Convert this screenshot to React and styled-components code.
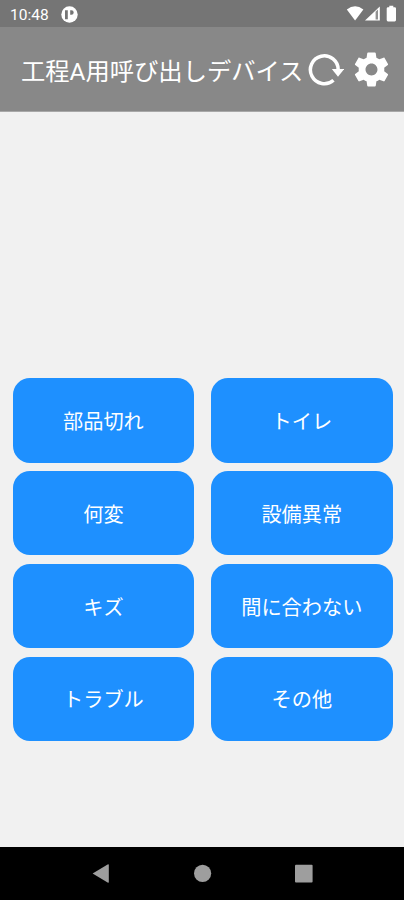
import styled, { createGlobalStyle } from "styled-components";

const calls = [
  "部品切れ",
  "トイレ",
  "何変",
  "設備異常",
  "キズ",
  "間に合わない",
  "トラブル",
  "その他",
];

const App = () => {
  return (
    <Screen>
      <GlobalStyle />
      <StatusBar>
        <Clock>10:48</Clock>
        <AppIcon />
        <StatusIcons />
      </StatusBar>
      <Header>
        <Title>工程A用呼び出しデバイス</Title>
        <IconButton aria-label="更新" $width={43}>
          <ReloadIcon />
        </IconButton>
        <IconButton aria-label="設定" $width={41}>
          <SettingsIcon />
        </IconButton>
      </Header>
      <Main>
        <CallList>
          {calls.map((name) => (
            <CallButton key={name}>{name}</CallButton>
          ))}
        </CallList>
      </Main>
      <NavBar>
        <svg width="404" height="53" viewBox="0 0 404 53" fill="#9e9e9e">
          <path d="M92.6 26.5L107.6 17.4Q108.8 16.8 108.8 18V35Q108.8 36.2 107.6 35.6Z" />
          <circle cx="202.6" cy="26.3" r="8.6" />
          <rect x="295" y="17.8" width="17.6" height="17.6" rx="1" />
        </svg>
      </NavBar>
    </Screen>
  );
};

export default App;

const AppIcon = () => (
  <svg width="17" height="17" viewBox="0 0 17 17">
    <circle cx="8.5" cy="8.5" r="8.2" fill="#fff" />
    <path
      d="M4 4.2H6.8V13.2H4ZM9.2 4.2H10.4A2.3 2.3 0 0 1 10.4 8.8H9.2Z"
      fill="#757575"
    />
  </svg>
);

const StatusIcons = () => (
  <StatusSvg width="51" height="18" viewBox="0 0 51 18" fill="#fff">
    <path d="M0.8 4.4Q9.1 -2 17.4 4.4L9.1 15.4Z" />
    <path d="M19 15.6L33.8 1.6V15.6Z" />
    <path d="M29.6 6.8L32 4.6V14.4H29.6Z" fill="#757575" fillOpacity="0.8" />
    <path d="M43.3 0.8H47.3V2.2H48.7Q50 2.2 50 3.5V15.1Q50 16.4 48.7 16.4H42Q40.7 16.4 40.7 15.1V3.5Q40.7 2.2 42 2.2H43.3Z" />
  </StatusSvg>
);

const ReloadIcon = () => (
  <svg width="36" height="34" viewBox="0 0 36 34">
    <path
      d="M30.2 18V17A13.9 13.9 0 1 0 25.5 27.2"
      fill="none"
      stroke="#fff"
      strokeWidth="3.5"
    />
    <path d="M23.8 16H36.2L30 23.8Z" fill="#fff" />
  </svg>
);

const SettingsIcon = () => (
  <svg width="41" height="41" viewBox="0 0 24 24" fill="#fff">
    <path d="M19.43 12.98c.04-.32.07-.64.07-.98s-.03-.66-.07-.98l2.11-1.65c.19-.15.24-.42.12-.64l-2-3.46c-.12-.22-.39-.3-.61-.22l-2.49 1c-.52-.4-1.08-.73-1.69-.98l-.38-2.65C14.46 2.18 14.25 2 14 2h-4c-.25 0-.46.18-.49.42l-.38 2.65c-.61.25-1.17.59-1.69.98l-2.49-1c-.23-.09-.49 0-.61.22l-2 3.46c-.13.22-.07.49.12.64l2.11 1.65c-.04.32-.07.65-.07.98s.03.66.07.98l-2.11 1.65c-.19.15-.24.42-.12.64l2 3.46c.12.22.39.3.61.22l2.49-1c.52.4 1.08.73 1.69.98l.38 2.65c.03.24.24.42.49.42h4c.25 0 .46-.18.49-.42l.38-2.65c.61-.25 1.17-.59 1.69-.98l2.49 1c.23.09.49 0 .61-.22l2-3.46c.12-.22.07-.49-.12-.64l-2.11-1.65zM12 15.5c-1.93 0-3.5-1.57-3.5-3.5s1.57-3.5 3.5-3.5 3.5 1.57 3.5 3.5-1.57 3.5-3.5 3.5z" />
  </svg>
);

const GlobalStyle = createGlobalStyle`
  body {
    margin: 0;
  }
  button {
    font: inherit;
    color: #fff;
    border: none;
    padding: 0;
  }
`;

const Screen = styled.div`
  width: 404px;
  height: 900px;
  display: flex;
  flex-direction: column;
  background-color: #f1f1f1;
  color: #fff;
  font-family: Roboto, "Noto Sans CJK JP", sans-serif;
`;
const StatusBar = styled.div`
  height: 27px;
  flex-shrink: 0;
  display: flex;
  align-items: center;
  padding: 2px 7px 0 10px;
  box-sizing: border-box;
  background-color: #757575;
`;
const Clock = styled.span`
  width: 51px;
  font-size: 15.5px;
  line-height: 20px;
`;
const StatusSvg = styled.svg`
  margin-left: auto;
  margin-top: -2px;
`;
const Header = styled.header`
  height: 85px;
  flex-shrink: 0;
  display: flex;
  align-items: center;
  padding-left: 21px;
  box-sizing: border-box;
  background-color: #888888;
  border-bottom: 1px solid #a8a8a8;
`;
const Title = styled.h1`
  width: 286.5px;
  margin: 0;
  padding-top: 5px;
  font-size: 24.3px;
  font-weight: 400;
  line-height: 36px;
  white-space: nowrap;
`;
const IconButton = styled.button`
  width: ${(props) => props.$width}px;
  height: 41px;
  margin-top: 1px;
  display: flex;
  align-items: center;
  background: none;
  flex-shrink: 0;
`;
const Main = styled.main`
  flex: 1;
  padding: 266.4px 11.5px 0 12.7px;
`;
const CallList = styled.div`
  display: grid;
  grid-template-columns: 1fr 1fr;
  grid-auto-rows: 84.2px;
  gap: 8.6px 17px;
`;
const CallButton = styled.button`
  border-radius: 17px;
  background-color: #1e90ff;
  font-size: 20.2px;
`;
const NavBar = styled.nav`
  height: 53px;
  flex-shrink: 0;
  background-color: #000;
`;
